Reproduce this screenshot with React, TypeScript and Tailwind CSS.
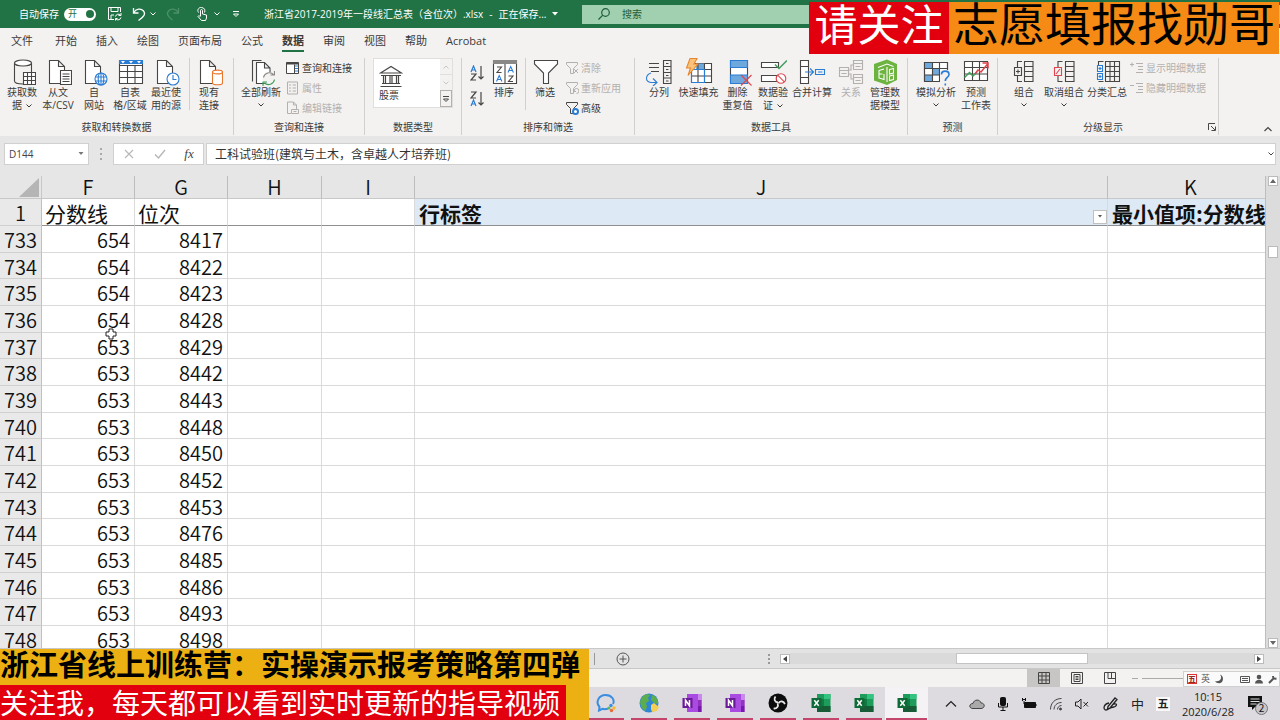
import React from "react";

const FONT = "font-['Open_Sans','Noto_Sans_CJK_SC',sans-serif]";
const CJK = "font-['Noto_Sans_CJK_SC',sans-serif]";

const INK = "#484644";
const BLUE = "#2b7cd3";
const GREEN = "#3f9c5a";
const RED = "#e0444f";
const PALE = "#6fa8dc";

type DrawProps = { children: React.ReactNode; color?: string };

function Draw({ children, color = INK }: DrawProps) {
  return (
    <svg
      aria-hidden="true"
      className="h-7 w-7 shrink-0"
      viewBox="0 0 28 28"
      fill="none"
      stroke={color}
      strokeWidth="1.1"
    >
      {children}
    </svg>
  );
}

function SmallDraw({ children, color = INK }: DrawProps) {
  return (
    <svg
      aria-hidden="true"
      className="h-3.5 w-3.5 shrink-0"
      viewBox="0 0 14 14"
      fill="none"
      stroke={color}
      strokeWidth="1"
    >
      {children}
    </svg>
  );
}

const page = <path d="M5.5 2.5h9l6 6v17h-15zM14.5 2.5v6h6" fill="#fff" />;

const icons = {
  getData: (
    <Draw>
      <path d="M6.500 5v18c0 2 4 3 8.500 3M23.500 5v10" />
      <ellipse cx="15" cy="5" rx="8.500" ry="3" fill="#fff" />
      <path d="M15.500 14.500h12v12h-12z" fill="#fff" />
      <path d="M15.500 18.500h12M15.500 22.500h12M19.500 14.500v12M23.500 14.500v12" />
    </Draw>
  ),
  text: (
    <Draw>
      {page}
      <path d="M16.500 12.500h11v14h-11z" fill="#fff" />
      <path d="M18.500 16h7M18.500 18.500h7M18.500 21h7M18.500 23.500h7" />
    </Draw>
  ),
  web: (
    <Draw>
      {page}
      <g stroke={BLUE}>
        <circle cx="21" cy="21" r="6" fill="#fff" />
        <ellipse cx="21" cy="21" rx="2.800" ry="6" />
        <path d="M15.500 19h11M15.500 23h11M21 15v12" />
      </g>
    </Draw>
  ),
  table: (
    <Draw>
      <path d="M3.500 2.500h23v23h-23z" fill="#fff" />
      <path d="M3 2h24v4H3z" fill={BLUE} stroke="none" />
      <path d="M5 3h4L7 5.500zM13 3h4l-2 2.500zM21 3h4l-2 2.500z" fill="#fff" stroke="none" />
      <path d="M3.500 7.500h23M3.500 13.500h23M3.500 19.500h23M11.500 7v18.500M19 7v18.500" />
    </Draw>
  ),
  recent: (
    <Draw>
      {page}
      <circle cx="21" cy="21" r="6" fill="#fff" stroke={BLUE} />
      <path d="M21 17v4.500h3.500" stroke={BLUE} />
    </Draw>
  ),
  existing: (
    <Draw>
      {page}
      <g stroke="#e8762d">
        <path d="M17.500 14v11c0 2.300 10 2.300 10 0V14" fill="#fff" />
        <ellipse cx="22.500" cy="14" rx="5" ry="1.900" fill="#fff" />
      </g>
    </Draw>
  ),
  refresh: (
    <Draw>
      <path d="M5.500 23.500v-21h9" />
      <path d="M9.500 4.500h8l5.500 5.500v15.500H9.500zM17.500 4.500V10H23" fill="#fff" />
      <circle cx="22" cy="20.500" r="6.500" fill="#f3f2f1" stroke="none" />
      <path d="M16.500 19.500a6 6 0 0 1 10-3M27.500 13v4h-4" stroke="#8a8886" />
      <path d="M27.500 21.500a6 6 0 0 1-10 3.500M16 28v-4h4" stroke={GREEN} />
    </Draw>
  ),
  sort: (
    <Draw>
      <path d="M3.500 2.500h23v23h-23z" fill="#fff" />
      <path d="M3 2h24v4H3z" fill="#8a8886" stroke="none" />
      <path d="M15 6v19.500" />
      <path d="M7 9h4.500L7 14.500h4.500M18.500 18h4.500l-4.500 5.500H23" />
      <path d="M6.500 23.500l2.700-6 2.700 6M7.500 21.500h3.500M18 14.500l2.700-6 2.700 6M19 12.500h3.500" stroke={BLUE} />
    </Draw>
  ),
  filter: (
    <Draw>
      <path d="M3.500 2.500h23v3.500l-9 9v10.500h-5V15l-9-9z" fill="#fff" />
    </Draw>
  ),
  columns: (
    <Draw>
      <path d="M4 5.500h10M4 9.500h10M6 13.500h8" />
      <path d="M6 15c-6 2-6 9 0 9.500h5M8 20.500l4 4-4 3.500" stroke={BLUE} />
      <path d="M18.500 2.500h7.500v23h-7.500zM18.500 8.500H26M18.500 14.500H26M18.500 20H26M21 5.500h2.500M21 11.500h2.500M21 17.500h2.500M21 23h2.500" />
    </Draw>
  ),
  flash: (
    <Draw>
      <path d="M6.500 5.500h20v19h-20z" fill="#fff" />
      <path d="M11 5.500h8.500v6H11z" fill={PALE} stroke="none" />
      <path d="M6.500 11.500h20M6.500 18h20M13 5.500v19M19.500 5.500v19" />
      <path d="M6.500 11.500h13v13h-13z" stroke={BLUE} />
      <path d="M5 0.500h7L9 6h4L3 17.500 5.500 10H1.500z" fill="#f8c27a" stroke="#e8862d" />
    </Draw>
  ),
  duplicates: (
    <Draw>
      <path d="M6.500 2.500h17v23h-17z" fill="#fff" />
      <path d="M6.500 2.500h17v7h-17zM6.500 17h17v8.500h-17z" fill={PALE} stroke={BLUE} />
      <path d="M17 17l10.500 10.500M27.500 17L17 27.500" stroke={RED} />
    </Draw>
  ),
  validation: (
    <Draw>
      <path d="M2.500 4.500h17v5h-17zM2.500 17.500h15v6h-15z" fill="#fff" />
      <path d="M16 6.500l4 4 8-8" stroke={GREEN} strokeWidth="1.500" />
      <circle cx="22" cy="20.500" r="4.800" fill="#fff" stroke={RED} />
      <path d="M18.700 17.200l6.600 6.600" stroke={RED} />
    </Draw>
  ),
  consolidate: (
    <Draw>
      <path d="M2.500 2.500h8v23h-8zM2.500 8.500h8M2.500 19.500h8" fill="#fff" />
      <path d="M7 14h8M12 10.500l3.500 3.500-3.500 3.500M17.500 11.500h9v5h-9zM20 14h4.500" stroke={BLUE} />
    </Draw>
  ),
  relations: (
    <Draw color="#b3b0ad">
      <path d="M2.500 9.500h9v9h-9zM2.500 12.500h9M16.500 2.500h9v9h-9zM16.500 5.500h9M16.500 16.500h9v9h-9zM16.500 19.500h9M11.500 12h2.500V7h2.500M11.500 16H14v5h2.500M4.500 15.500h5M18.500 8.500h5M18.500 22.500h5" />
    </Draw>
  ),
  model: (
    <Draw>
      <path d="M3 6l13-4.500L26 6v16l-10 5L3 22.500z" fill="#6cb33f" stroke="none" />
      <path d="M7 9.500l9-3.500 6.500 2.500M8 12v8.500M8 12.500l5-1.500M8 16h3.500M8 20l5 1.500V16M16 9v15M18.500 11.500l4-1v4.500l-4 1zM18.500 18l4-1v4.500l-4 1z" stroke="#fff" />
    </Draw>
  ),
  whatIf: (
    <Draw>
      <path d="M2.500 4.500h23v19h-23z" fill="#fff" />
      <path d="M2.500 4.500h8v6h-8zM10.500 10.500h7v6.500h-7zM2.500 17h8v6.500h-8z" fill={PALE} stroke="none" />
      <path d="M2.500 4.500h23v19h-23zM2.500 10.500h23M2.500 17h23M10.500 4.500v19M17.500 4.500v19" />
      <path d="M18 12h10v16H18z" fill="#f3f2f1" stroke="none" />
      <path d="M19.500 16.500c0-4.500 7.500-4.500 7.500 0 0 3-3.700 3-3.700 6.500M23.300 25.500v2" stroke={BLUE} strokeWidth="1.600" />
    </Draw>
  ),
  forecast: (
    <Draw>
      <path d="M2.500 3.500h23v19h-23zM2.500 9.500h23M2.500 16h23M10.500 3.500v19M17.500 3.500v19" fill="#fff" />
      <path d="M2.500 19.500l5-5 3.500 3.500 4-4" stroke={GREEN} strokeWidth="1.500" />
      <path d="M13 16l3-4 3 2 7-8.500M20.500 5H26v5.500" stroke={RED} strokeWidth="1.500" />
    </Draw>
  ),
  group: (
    <Draw>
      <path d="M14.500 3.500H23v20h-8.500zM14.500 8.500H23M14.500 13.500H23M14.500 18.500H23M12 3.500H7.500V9M12 23.500H7.500V18M4.500 9.500h7v8h-7zM6 13.500h4M8 11.500v4" />
    </Draw>
  ),
  ungroup: (
    <Draw>
      <path d="M15.500 3.500H24v20h-8.500zM15.500 8.500H24M15.500 13.500H24M15.500 18.500H24M12.500 3.500H8V9M12.500 23.500H8V18" />
      <path d="M4.500 9.500h7v8h-7zM6 16l4-5" stroke={RED} />
    </Draw>
  ),
  subtotal: (
    <Draw>
      <path d="M12.500 3.500h14v20h-14zM12.500 8.500h14M12.500 13.500h14M12.500 18.500h14M17 3.500v20M21.500 3.500v20M10.500 3.500h-5V7M10.500 23.500h-5" />
      <path d="M4.500 7.500h5v6h-5zM4.500 15.500h5v6h-5zM5.500 10.500h3M7 9v3M5.500 18.500h3M7 17v3" stroke={BLUE} />
    </Draw>
  ),
};

const smallFilter = <path d="M1.500 1.500h11v2l-4 4v5h-3v-5l-4-4z" />;

const smallIcons = {
  queries: (
    <SmallDraw>
      <path d="M0.500 1.500h12v11h-12z" fill="#fff" />
      <path d="M0.500 2.500h12" strokeWidth="2" />
      <path d="M8.500 3.500v9" />
      <path d="M9 5h3M9 7.500h3M9 10h3" stroke={BLUE} />
    </SmallDraw>
  ),
  properties: (
    <SmallDraw color="#b3b0ad">
      <path d="M1.500 1h10v12h-10zM3 4h2M6.500 4h3.500M3 7h2M6.500 7h3.500M3 10h2M6.500 10h3.500" />
    </SmallDraw>
  ),
  links: (
    <SmallDraw color="#b3b0ad">
      <path d="M1.500 1h6l3 3v4M1.500 1v11.500H5M7.500 1v3h3M5.500 8.500h7v4h-7zM7.500 10.500h3" />
    </SmallDraw>
  ),
  clear: (
    <SmallDraw color="#b3b0ad">
      {smallFilter}
      <path d="M9 8l4 4M13 8l-4 4" />
    </SmallDraw>
  ),
  reapply: (
    <SmallDraw color="#b3b0ad">
      {smallFilter}
      <path d="M9 10a2.500 2.500 0 1 1 2.500 2.500M9 8v2.500h2" />
    </SmallDraw>
  ),
  advanced: (
    <SmallDraw>
      {smallFilter}
      <circle cx="10.500" cy="10.500" r="2.500" fill="#fff" stroke={BLUE} strokeWidth="2" />
    </SmallDraw>
  ),
  showDetail: (
    <SmallDraw color="#b3b0ad">
      <path d="M0 3.500h4M2 1.500v4M6 2.500h7M8 5.500h5M8 8.500h5M6 11.500h7" />
    </SmallDraw>
  ),
  hideDetail: (
    <SmallDraw color="#b3b0ad">
      <path d="M0 4.500h4M6 2.500h7M8 5.500h5M8 8.500h5M6 11.500h7" />
    </SmallDraw>
  ),
};

function Caret({ className = "" }: { className?: string }) {
  return (
    <svg aria-hidden="true" className={`inline-block h-1 w-1.5 ${className}`} viewBox="0 0 6 4" fill="none" stroke="currentColor">
      <path d="M0.500 0.500L3 3l2.500-2.500" />
    </svg>
  );
}

type BigProps = {
  icon: React.ReactNode;
  lines: string[];
  width: string;
  caret?: boolean;
  disabled?: boolean;
};

function Big({ icon, lines, width, caret, disabled }: BigProps) {
  return (
    <button
      type="button"
      disabled={disabled}
      className={`flex shrink-0 flex-col items-center whitespace-nowrap leading-[13px] ${width} ${disabled ? "text-[#b3b0ad]" : ""}`}
    >
      {icon}
      {lines.map((line, i) => (
        <span key={line} className="flex items-center gap-1">
          {line}
          {caret && lines.length > 1 && i === lines.length - 1 && <Caret />}
        </span>
      ))}
      {caret && lines.length === 1 && (
        <span className="flex h-3 items-center">
          <Caret />
        </span>
      )}
    </button>
  );
}

function Small({ icon, label, disabled }: { icon: React.ReactNode; label: string; disabled?: boolean }) {
  return (
    <button
      type="button"
      disabled={disabled}
      className={`flex h-5 items-center gap-0.5 whitespace-nowrap ${disabled ? "text-[#b3b0ad]" : ""}`}
    >
      {icon}
      {label}
    </button>
  );
}

function Group({ label, width, children, launcher }: { label: string; width: string; children: React.ReactNode; launcher?: boolean }) {
  return (
    <section aria-label={label} className={`flex shrink-0 flex-col border-r border-[#d2d0ce] ${width}`}>
      <div className="flex flex-1 items-start pl-1">{children}</div>
      <div className="flex h-4 items-center">
        <span className="flex-1 text-center">{label}</span>
        {launcher && (
          <button type="button" aria-label="分级显示设置" className="mr-0.5">
            <svg className="h-2 w-2" viewBox="0 0 8 8" fill="none" stroke={INK}>
              <path d="M0.500 7V0.500H7M3 3l4 4M7.500 3.500v4h-4" />
            </svg>
          </button>
        )}
      </div>
    </section>
  );
}

const Rule = () => <div className="mx-px h-[52px] w-px shrink-0 bg-[#d2d0ce]" />;

function SortLetters({ top, bottom, label }: { top: "A" | "Z"; bottom: "A" | "Z"; label: string }) {
  const a = (y: number) => <path key="a" d={`M1 ${y + 6}l2.500-6 2.500 6M2 ${y + 4}h3`} stroke={BLUE} />;
  const z = (y: number) => <path key="z" d={`M1 ${y}h5l-5 6h5`} stroke={INK} />;
  return (
    <button type="button" aria-label={label} className="flex h-[26px] items-center">
      <svg className="h-4 w-3.5" viewBox="0 0 14 16" fill="none" strokeWidth="1.200">
        {top === "A" ? a(1) : z(1)}
        {bottom === "A" ? a(9) : z(9)}
        <path d="M11 1v13M8.500 11.500L11 14l2.500-2.500" stroke={INK} />
      </svg>
    </button>
  );
}

const tabs = ["文件", "开始", "插入", "绘图", "页面布局", "公式", "数据", "审阅", "视图", "帮助", "Acrobat"];

function TitleBar() {
  return (
    <header className="flex h-7 shrink-0 items-center bg-[#217346] text-[10px] text-white">
      <label className="ml-[19px] flex items-center gap-[5px]">
        自动保存
        <button type="button" role="switch" aria-checked="true" className="flex h-[13px] w-8 items-center justify-between rounded-full bg-white pr-0.5 pl-1 text-[9px] text-[#217346]">
          开
          <span className="h-2 w-2 rounded-full bg-[#217346]" />
        </button>
      </label>
      <div className="ml-3 flex w-[130px] items-center">
        <button type="button" aria-label="保存">
          <svg className="h-3.5 w-3.5" viewBox="0 0 14 14" fill="none" stroke="#fff">
            <path d="M6 12.500H0.500v-12h12V5M3 0.500v4h7v-4M3 12V8h3" />
            <path d="M7.500 9.500a3 3 0 0 1 5-1.500M13 6v2.500h-2.500M13 10.500a3 3 0 0 1-5 1.500M7.500 13.500v-2h2" />
          </svg>
        </button>
        <button type="button" aria-label="撤消" className="ml-2.5 flex items-center gap-1">
          <svg className="h-3.5 w-3.5" viewBox="0 0 14 14" fill="none" stroke="#fff" strokeWidth="1.300">
            <path d="M1.500 1v5h5M1.500 6C4 1.500 9 1 11.500 4s0 6-5 9.500" />
          </svg>
          <Caret />
        </button>
        <button type="button" aria-label="恢复" disabled className="ml-2.5">
          <svg className="h-3.5 w-3.5" viewBox="0 0 14 14" fill="none" stroke="#4b9069" strokeWidth="1.300">
            <path d="M12.500 1v5h-5M12.500 6C10 1.500 5 1 2.500 4s0 6 4 9" />
          </svg>
        </button>
        <button type="button" aria-label="触摸/鼠标模式" className="ml-4 flex items-center gap-1.5">
          <svg className="h-3.5 w-3" viewBox="0 0 12 14" fill="none" stroke="#fff">
            <path d="M4.500 9V3.500c0-1.300 2-1.300 2 0V7l4 1v3l-1 2.500H5.500L2 9.500l1-1 1.500 1.500M2.500 5.500c-2-3 1-5.500 3-5 3 0 4 3 3 5" />
          </svg>
          <Caret />
        </button>
        <button type="button" aria-label="自定义快速访问工具栏" className="ml-3">
          <svg className="h-2 w-2" viewBox="0 0 8 8" fill="none" stroke="#fff">
            <path d="M1 1.500h6M1.500 4L4 6.500 6.500 4z" />
          </svg>
        </button>
      </div>
      <h1 className="ml-[26px] flex items-center gap-1.5 whitespace-nowrap">
        <span>浙江省2017-2019年一段线汇总表（含位次）.xlsx</span>
        <span>-</span>
        <span>正在保存...</span>
        <svg aria-hidden="true" className="h-1 w-1.5" viewBox="0 0 6 4" fill="#fff">
          <path d="M0 0h6L3 3.500z" />
        </svg>
      </h1>
      <label className="ml-auto flex h-[19px] w-[698px] items-center gap-3 bg-[#a0d0b0] pl-4 text-[#1e5c3a]">
        <svg aria-hidden="true" className="h-3 w-3" viewBox="0 0 12 12" fill="none" stroke="currentColor" strokeWidth="1.200">
          <circle cx="7.500" cy="4.500" r="3.800" />
          <path d="M4.800 7.200L0.500 11.500" />
        </svg>
        <input aria-label="搜索" placeholder="搜索" className="flex-1 bg-transparent outline-none placeholder:text-[#1e5c3a]" />
      </label>
    </header>
  );
}

function Ribbon() {
  return (
    <div className="shrink-0 bg-[#f3f2f1] text-[10px] text-[#3b3a39]">
      <nav className="flex h-[26px] items-start gap-[19px] pt-1 pl-[11px] text-[11px]">
        {tabs.map((tab) => (
          <button
            key={tab}
            type="button"
            className={`h-5 border-b-2 leading-[18px] first:mr-[3px] ${tab === "数据" ? "border-[#217346] font-bold" : "border-transparent"}`}
          >
            {tab}
          </button>
        ))}
      </nav>
      <div className="relative flex h-[82px] pt-1 pb-px">
        <Group label="获取和转换数据" width="w-[234px]">
          <Big icon={icons.getData} lines={["获取数", "据"]} width="w-9" caret />
          <Big icon={icons.text} lines={["从文", "本/CSV"]} width="w-9" />
          <Big icon={icons.web} lines={["自", "网站"]} width="w-9" />
          <Big icon={icons.table} lines={["自表", "格/区域"]} width="w-9" />
          <Big icon={icons.recent} lines={["最近使", "用的源"]} width="w-9" />
          <div className="w-1" />
          <Rule />
          <Big icon={icons.existing} lines={["现有", "连接"]} width="w-9" />
        </Group>
        <Group label="查询和连接" width="w-[131px]">
          <Big icon={icons.refresh} lines={["全部刷新"]} width="w-[46px]" caret />
          <div className="pl-0.5">
            <Small icon={smallIcons.queries} label="查询和连接" />
            <Small icon={smallIcons.properties} label="属性" disabled />
            <Small icon={smallIcons.links} label="编辑链接" disabled />
          </div>
        </Group>
        <Group label="数据类型" width="w-[97px]">
          <div className="ml-1 flex h-[50px] w-20 border border-[#e1dfdd] bg-white">
            <button type="button" className="flex flex-1 flex-col items-start pt-1.5 pl-[5px]">
              <svg aria-hidden="true" className="h-6 w-6" viewBox="0 0 24 24" fill="none" stroke={INK} strokeWidth="1.200">
                <path d="M1.500 8L12 1.500 22.500 8zM2 10.500h20M4.500 10.500v8M6.500 10.500v8M11 10.500v8M13 10.500v8M17.500 10.500v8M19.500 10.500v8M3 18.500h18M1.500 21.500h21" />
              </svg>
              <span className="leading-[13px]">股票</span>
            </button>
            <div className="flex w-3 flex-col bg-[#f3f2f1] text-[#c8c6c4]">
              <button type="button" aria-label="上一行" className="flex flex-1 items-center justify-center border-b border-[#e1dfdd]">
                <Caret className="rotate-180" />
              </button>
              <button type="button" aria-label="下一行" className="flex flex-1 items-center justify-center">
                <Caret />
              </button>
              <button type="button" aria-label="其他" className="flex flex-1 items-center justify-center border border-[#b3b0ad]">
                <svg className="h-2 w-2" viewBox="0 0 8 8" fill="none" stroke={INK}>
                  <path d="M1 1.500h6M1.500 4L4 6.500 6.500 4z" />
                </svg>
              </button>
            </div>
          </div>
        </Group>
        <Group label="排序和筛选" width="w-[173px]">
          <div className="flex w-[22px] flex-col pt-0.5 pl-1">
            <SortLetters top="A" bottom="Z" label="升序" />
            <SortLetters top="Z" bottom="A" label="降序" />
          </div>
          <Big icon={icons.sort} lines={["排序"]} width="w-8" />
          <div className="w-1" />
          <Rule />
          <Big icon={icons.filter} lines={["筛选"]} width="w-9" />
          <div className="pl-0.5">
            <Small icon={smallIcons.clear} label="清除" disabled />
            <Small icon={smallIcons.reapply} label="重新应用" disabled />
            <Small icon={smallIcons.advanced} label="高级" />
          </div>
        </Group>
        <Group label="数据工具" width="w-[273px]">
          <Big icon={icons.columns} lines={["分列"]} width="w-10" />
          <Big icon={icons.flash} lines={["快速填充"]} width="w-[39px]" />
          <Big icon={icons.duplicates} lines={["删除", "重复值"]} width="w-[39px]" />
          <Big icon={icons.validation} lines={["数据验", "证"]} width="w-8" caret />
          <Big icon={icons.consolidate} lines={["合并计算"]} width="w-[46px]" />
          <Big icon={icons.relations} lines={["关系"]} width="w-8" disabled />
          <Big icon={icons.model} lines={["管理数", "据模型"]} width="w-9" />
        </Group>
        <Group label="预测" width="w-[90px]">
          <Big icon={icons.whatIf} lines={["模拟分析"]} width="w-12" caret />
          <Big icon={icons.forecast} lines={["预测", "工作表"]} width="w-8" />
        </Group>
        <Group label="分级显示" width="w-[221px]" launcher>
          <div className="w-0.5" />
          <Big icon={icons.group} lines={["组合"]} width="w-10" caret />
          <Big icon={icons.ungroup} lines={["取消组合"]} width="w-10" caret />
          <Big icon={icons.subtotal} lines={["分类汇总"]} width="w-[46px]" />
          <div>
            <Small icon={smallIcons.showDetail} label="显示明细数据" disabled />
            <Small icon={smallIcons.hideDetail} label="隐藏明细数据" disabled />
          </div>
        </Group>
        <button type="button" aria-label="折叠功能区" className="mr-2 mb-0.5 ml-auto self-end">
          <svg className="h-2 w-2" viewBox="0 0 8 8" fill="none" stroke={INK} strokeWidth="1.200">
            <path d="M0.500 6L4 2.500 7.500 6" />
          </svg>
        </button>
      </div>
    </div>
  );
}

function FormulaBar() {
  return (
    <div className="flex h-10 shrink-0 items-start gap-1 bg-[#e6e6e6] pt-[7px] pr-1 pl-1">
      <div className="flex h-[22px] w-[85px] items-center border border-[#d2d0ce] bg-white pr-1 pl-1 text-[#444]">
        <input aria-label="名称框" defaultValue="D144" className="w-full min-w-0 bg-transparent text-[10px] outline-none" />
        <svg aria-hidden="true" className="h-1 w-1.5 shrink-0" viewBox="0 0 6 4" fill="#777">
          <path d="M0.500 0h5L3 3z" />
        </svg>
      </div>
      <div className="flex h-[22px] w-4 flex-col items-center justify-center gap-[3px]">
        <i className="h-0.5 w-0.5 bg-[#aaa]" />
        <i className="h-0.5 w-0.5 bg-[#aaa]" />
        <i className="h-0.5 w-0.5 bg-[#aaa]" />
      </div>
      <div className="flex h-[22px] w-[91px] items-center justify-around border border-[#d2d0ce] bg-white">
        <button type="button" aria-label="取消">
          <svg className="h-3 w-3" viewBox="0 0 12 12" fill="none" stroke="#b8b8b8" strokeWidth="1.200">
            <path d="M2 2l8 8M10 2l-8 8" />
          </svg>
        </button>
        <button type="button" aria-label="输入">
          <svg className="h-3 w-3" viewBox="0 0 12 12" fill="none" stroke="#b8b8b8" strokeWidth="1.500">
            <path d="M1 6.500L4.500 10 11 2" />
          </svg>
        </button>
        <button type="button" className="font-['Liberation_Serif',serif] text-[13px] leading-4 text-[#444] italic">
          fx
        </button>
      </div>
      <div className="-ml-0.5 flex h-[22px] flex-1 items-center border border-[#d2d0ce] bg-white pl-2">
        <input
          aria-label="编辑栏"
          defaultValue="工科试验班(建筑与土木，含卓越人才培养班)"
          className={`${CJK} flex-1 bg-transparent text-[12px] text-[#333] outline-none`}
        />
        <Caret className="mr-px text-[#444]" />
      </div>
    </div>
  );
}

const ranks = [8417, 8422, 8423, 8428, 8429, 8442, 8443, 8448, 8450, 8452, 8453, 8476, 8485, 8486, 8493, 8498];
const rows = ranks.map((rank, i) => ({ line: 733 + i, score: i < 4 ? 654 : 653, rank }));

const headCell = "border-r border-b border-[#bdbdbd] border-b-[#c8c8c8] p-0 text-center font-[350]";
const sideCell = "border-r border-b border-[#c0c0c0] border-b-[#d0d0d0] bg-[#e9e9e9] p-0 pt-0.5 text-center font-[350]";
const cell = "border-r border-b border-[#dadada] p-0 pt-0.5";

function Sheet() {
  return (
    <main className="flex min-h-0 flex-1 bg-[#e6e6e6]">
      <div className="relative min-w-0 flex-1 overflow-hidden bg-white">
        <table className={`${CJK} w-full table-fixed border-separate border-spacing-0 text-[20px] leading-[22px] font-[350] text-[#111]`}>
          <colgroup>
            <col className="w-[42px]" />
            <col className="w-[93px]" />
            <col className="w-[93px]" />
            <col className="w-[94px]" />
            <col className="w-[93px]" />
            <col />
            <col className="w-[157px]" />
          </colgroup>
          <thead>
            <tr className="h-[23px] bg-[#e6e6e6]">
              <th className="border-r border-b border-[#c8c8c8] p-0">
                <svg aria-label="全选" className="ml-auto h-[19px] w-[22px]" viewBox="0 0 22 19" fill="#b5b5b5">
                  <path d="M20 0v19H0z" />
                </svg>
              </th>
              {["F", "G", "H", "I", "J"].map((name) => (
                <th key={name} scope="col" className={headCell}>{name}</th>
              ))}
              <th scope="col" className="border-b border-[#c8c8c8] p-0 pl-2 text-center font-[350]">K</th>
            </tr>
          </thead>
          <tbody>
            <tr className="h-[27px] text-[21px]">
              <th scope="row" className={`${sideCell} border-b-[#8f8f8f] text-[20px]`}>1</th>
              <td className={`${cell} border-b-[#8f8f8f] pl-[3px] font-normal`}>分数线</td>
              <td className={`${cell} border-b-[#8f8f8f] pl-[3px] font-normal`}>位次</td>
              <td className={`${cell} border-b-[#8f8f8f]`} />
              <td className={`${cell} border-b-[#8f8f8f]`} />
              <td className={`${cell} border-b-[#8f8f8f] bg-[#dde9f5] pl-1 font-bold`}>
                <div className="flex items-end justify-between">
                  行标签
                  <button type="button" aria-label="筛选行标签" className="flex h-3.5 w-3.5 items-center justify-center border border-[#c0c0c0] bg-white">
                    <svg className="h-1 w-1.5" viewBox="0 0 6 4" fill="#555">
                      <path d="M1 0h4L3 2.500z" />
                    </svg>
                  </button>
                </div>
              </td>
              <td className="overflow-hidden border-b border-[#8f8f8f] bg-[#dde9f5] p-0 pt-0.5 pl-1 font-bold whitespace-nowrap">最小值项:分数线</td>
            </tr>
            {rows.map((row, i) => (
              <tr key={row.line} className={i % 3 === 1 ? "h-[26px]" : "h-[27px]"}>
                <th scope="row" className={sideCell}>{row.line}</th>
                <td className={`${cell} pr-1 text-right`}>{row.score}</td>
                <td className={`${cell} pr-1 text-right`}>{row.rank}</td>
                <td className={cell} />
                <td className={cell} />
                <td className={cell} />
                <td className="border-b border-[#dadada] p-0" />
              </tr>
            ))}
          </tbody>
        </table>
        <svg aria-hidden="true" className="absolute top-[152px] left-[105px] h-3 w-3" viewBox="0 0 12 12" fill="#fff" stroke="#222">
          <path d="M4 1h4v3h3v4H8v3H4V8H1V4h3z" />
        </svg>
      </div>
      <div className="flex w-[15px] flex-col items-center border-l border-[#bdbdbd] bg-[#dcdcdc]">
        <button type="button" aria-label="向上滚动" className="flex h-2.5 w-2.5 items-center justify-center border border-[#bbb] bg-white">
          <svg className="h-1 w-1.5" viewBox="0 0 6 4" fill="#666">
            <path d="M0 4h6L3 0z" />
          </svg>
        </button>
        <div className="mt-[60px] h-3 w-2.5 border border-[#bbb] bg-white" />
        <button type="button" aria-label="向下滚动" className="mt-auto flex h-2.5 w-2.5 items-center justify-center border border-[#bbb] bg-white">
          <svg className="h-1 w-1.5" viewBox="0 0 6 4" fill="#666">
            <path d="M0 0h6L3 4z" />
          </svg>
        </button>
      </div>
    </main>
  );
}

function SheetTabs() {
  return (
    <div className="flex h-[21px] shrink-0 items-center border-y border-[#c8c8c8] bg-[#e3e3e3] pr-4 pl-[594px]">
      <div className="h-3 w-px bg-[#999]" />
      <button type="button" aria-label="新工作表" className="ml-[21px]">
        <svg className="h-3.5 w-3.5" viewBox="0 0 14 14" fill="none" stroke="#555">
          <circle cx="7" cy="7" r="6" />
          <path d="M7 3.500v7M3.500 7h7" />
        </svg>
      </button>
      <div className="ml-auto flex w-[496px] items-center">
        <div className="flex w-3 flex-col gap-0.5">
          <i className="h-0.5 w-0.5 bg-[#999]" />
          <i className="h-0.5 w-0.5 bg-[#999]" />
          <i className="h-0.5 w-0.5 bg-[#999]" />
        </div>
        <button type="button" aria-label="向左滚动" className="flex h-2.5 w-2.5 items-center justify-center border border-[#bbb] bg-white">
          <svg className="h-1.5 w-1" viewBox="0 0 4 6" fill="#444">
            <path d="M4 0v6L0 3z" />
          </svg>
        </button>
        <div className="flex h-[11px] flex-1 justify-end bg-[#dadada] pr-[166px]">
          <div className="w-[132px] border border-[#c4c4c4] bg-white" />
        </div>
        <button type="button" aria-label="向右滚动" className="flex h-2.5 w-2.5 items-center justify-center border border-[#bbb] bg-white">
          <svg className="h-1.5 w-1" viewBox="0 0 4 6" fill="#444">
            <path d="M0 0v6l4-3z" />
          </svg>
        </button>
      </div>
    </div>
  );
}

function StatusBar() {
  return (
    <div className="relative flex h-[18px] shrink-0 items-stretch justify-end bg-[#f3f2f1]">
      <button type="button" aria-label="普通视图" className="flex w-[33px] items-center justify-center bg-[#c8c6c4]">
        <svg className="h-3 w-3" viewBox="0 0 12 12" fill="none" stroke="#444">
          <path d="M0.500 0.500h11v11H0.500zM0.500 4h11M0.500 8h11M4 0.500v11M8 0.500v11" />
        </svg>
      </button>
      <button type="button" aria-label="页面布局视图" className="flex w-[33px] items-center justify-center">
        <svg className="h-3 w-3" viewBox="0 0 12 12" fill="none" stroke="#444">
          <path d="M0.500 0.500h11v11H0.500zM3 2.500h6v7H3zM4.500 4.500h3M4.500 6h3M4.500 7.500h3" />
        </svg>
      </button>
      <button type="button" aria-label="分页预览" className="flex w-[33px] items-center justify-center">
        <svg className="h-3 w-3" viewBox="0 0 12 12" fill="none" stroke="#444">
          <path d="M0.500 0.500h11v11H0.500zM4 0.500v6h7.500M7.500 0.500v6" />
        </svg>
      </button>
      <div className="flex w-[154px] items-center gap-1 pl-1.5">
        <div className="h-px w-1.5 bg-[#aaa]" />
        <div className="h-px flex-1 bg-[#aaa]" />
      </div>
      <div className="absolute top-0.5 right-0 z-10 flex h-4 w-[97px] items-center gap-1 border border-[#d0d0d0] bg-[#fafafa] pl-[3px] text-[9px] text-[#555]">
        <span className="flex h-2.5 w-2.5 items-center justify-center border border-[#d33] text-[8px] leading-[8px] font-bold text-[#922]">五</span>
        英
        <svg aria-label="半角" className="h-2.5 w-2.5" viewBox="0 0 10 10" fill="#555">
          <path d="M6 0.500c3 4-0.500 7.500-5 6.500 2 3.500 8 3 8-2 0-2-1-4-3-4.500z" />
        </svg>
        <svg aria-label="软键盘" className="ml-3 h-2.5 w-2.5" viewBox="0 0 10 10" fill="none" stroke="#555">
          <path d="M0.500 2.500h9v6h-9zM2 4.500h6M2 6.500h6" />
        </svg>
        <svg aria-label="用户" className="h-2.5 w-2.5" viewBox="0 0 10 10" fill="#555">
          <circle cx="5" cy="3" r="2.300" />
          <path d="M1 9.500c0-5 8-5 8 0z" />
        </svg>
        <svg aria-label="设置" className="h-2.5 w-2.5" viewBox="0 0 10 10" fill="none" stroke="#555" strokeWidth="2">
          <path d="M1 9l5-5M5 2c0 2 1 3 3.500 2.500" />
        </svg>
      </div>
    </div>
  );
}

function ExcelLogo() {
  return (
    <svg className="h-5 w-5" viewBox="0 0 20 20">
      <path d="M6 1h13.500v18H6z" fill="#1e9c5c" />
      <path d="M13 1h6.500v5H13z" fill="#33c481" />
      <path d="M6 6h7v7H6z" fill="#107c41" />
      <path d="M6 13h13.500v6H6z" fill="#185c37" />
      <path d="M0.500 5h10v10h-10z" fill="#0e6a37" />
      <path d="M3.300 7.200l4.400 5.600M7.700 7.200l-4.400 5.600" stroke="#fff" strokeWidth="1.500" />
    </svg>
  );
}

function NoteLogo() {
  return (
    <svg className="h-5 w-5" viewBox="0 0 20 20">
      <path d="M5 1h14.500v18H5z" fill="#a94be0" />
      <path d="M16 1h3.500v6H16z" fill="#c987ef" />
      <path d="M16 7h3.500v6H16z" fill="#9332bf" />
      <path d="M16 13h3.500v6H16z" fill="#7719aa" />
      <path d="M0.500 5h10v10h-10z" fill="#6b1a99" />
      <path d="M3.500 13V7.200l4 5.600V7" stroke="#fff" strokeWidth="1.500" fill="none" />
    </svg>
  );
}

const apps = [
  {
    name: "企业微信",
    logo: (
      <svg className="h-5 w-5" viewBox="0 0 20 20" fill="none">
        <path d="M12 15.500c-2 .8-4 .8-5.500.3L3 17.500l.5-3.500C-1 9 3 2 9.500 2S19 7 17 11" stroke="#3b8de0" strokeWidth="2" />
        <circle cx="15" cy="12.500" r="1.700" fill="#3b8de0" />
        <circle cx="18" cy="15" r="1.700" fill="#f6b92c" />
        <circle cx="15.500" cy="17.500" r="1.700" fill="#e8663c" />
        <circle cx="13" cy="15" r="1.500" fill="#5cb85c" />
      </svg>
    ),
  },
  {
    name: "浏览器",
    logo: (
      <svg className="h-5 w-5" viewBox="0 0 20 20">
        <circle cx="10" cy="10" r="9.500" fill="#2f86d6" />
        <path d="M4 3c3-2.500 6-2 7-1L9 5l1 3-3 2 1 4-2 4C2 15 .5 10 1.500 7z" fill="#5cae4c" />
        <path d="M13 2c4 1 6.500 5 6 9l-4-1-3-3z" fill="#5cae4c" />
        <path d="M12 12l3-2 5 4-2 4-5 1-1-3z" fill="#f3cf57" />
      </svg>
    ),
  },
  { name: "OneNote", logo: <NoteLogo /> },
  { name: "OneNote 2016", logo: <NoteLogo /> },
  {
    name: "OBS",
    logo: (
      <svg className="h-5 w-5" viewBox="0 0 20 20" fill="none">
        <circle cx="10" cy="10" r="9.500" fill="#0c0c0c" />
        <g stroke="#e8e8e8" strokeWidth="1.800">
          <path d="M10 9.500C6.500 9 5.500 6 7.500 3.500" />
          <path d="M10 9.500C6.500 9 5.500 6 7.500 3.500" transform="rotate(120 10 10)" />
          <path d="M10 9.500C6.500 9 5.500 6 7.500 3.500" transform="rotate(240 10 10)" />
        </g>
      </svg>
    ),
  },
  { name: "Excel 1", logo: <ExcelLogo /> },
  { name: "Excel 2", logo: <ExcelLogo /> },
  { name: "Excel 3", logo: <ExcelLogo />, active: true },
];

function Taskbar() {
  return (
    <footer className="flex h-[33px] shrink-0 items-stretch bg-[#dddbe0] pl-[584px] text-[#222]">
      {apps.map((app) => (
        <button key={app.name} type="button" aria-label={app.name} className={`flex w-[43px] flex-col items-center px-px ${app.active ? "bg-[#f4f2f5]" : ""}`}>
          <span className="flex flex-1 items-center">{app.logo}</span>
          <span className={`h-0.5 bg-[#c4456b] ${app.active ? "w-full" : "w-9"}`} />
        </button>
      ))}
      <div className="ml-auto flex items-center gap-3 whitespace-nowrap">
        <svg aria-label="显示隐藏的图标" className="h-3 w-3" viewBox="0 0 12 12" fill="none" stroke="#222" strokeWidth="1.200">
          <path d="M1 8.500L6 3.500l5 5" />
        </svg>
        <svg aria-label="OneDrive" className="h-4 w-4" viewBox="0 0 16 16" fill="#aaa" stroke="#444">
          <path d="M4 12.500c-4.500 0-4-5 0-5C5 3 11 3 12 7c4.500 0 4 5.500 0 5.500z" />
        </svg>
        <svg aria-label="麦克风" className="h-4 w-3" viewBox="0 0 12 16" fill="#111" stroke="#111">
          <rect x="3.500" y="1.500" width="5" height="8" rx="1" />
          <path d="M1.500 7v4h9V7M6 11v3.500M3.500 14.500h5" fill="none" />
        </svg>
        <svg aria-label="电池" className="h-4 w-4" viewBox="0 0 16 16" fill="#111" stroke="#111">
          <path d="M3.500 6.500h11v5h-11zM15 8v2M1 3.500h4M1.500 2v3M4.500 2v3M3 5v3" />
        </svg>
        <svg aria-label="无线网络" className="h-3.5 w-3.5" viewBox="0 0 14 14" fill="none" stroke="#444">
          <path d="M1.500 12.500C1.500 6 6 1.500 12.500 1.500M5 12.500c0-4 3-7 7.500-7M8.500 12.500c0-2 1.500-4 4-4" />
          <circle cx="11.500" cy="12" r="1" fill="#444" />
        </svg>
        <svg aria-label="静音" className="h-3.5 w-3.5" viewBox="0 0 14 14" fill="none" stroke="#222">
          <path d="M0.500 5h2.500l3-3v10l-3-3H0.500zM8.500 5l4.500 4.500M13 5L8.500 9.500" />
        </svg>
        <svg aria-label="Windows Ink" className="ml-0.5 h-4 w-4" viewBox="0 0 16 16" fill="none" stroke="#222" strokeWidth="1.300">
          <path d="M5 10.500L12 2l2 1.500-7 8.500-2.500 1zM9 9c5-3 6 .5 2 2M6 7c-6 1-6 7-3 7s3-3 8-3" />
        </svg>
        <span className={`${CJK} text-[13px]`}>中</span>
        <span className={`${CJK} flex h-3.5 w-3.5 items-center justify-center bg-[#f8f8f8] text-[11px] font-bold`}>五</span>
        <time className="text-center text-[11px] leading-[15px]">
          10:15
          <br />
          2020/6/28
        </time>
        <button type="button" aria-label="通知" className="mr-2.5">
          <svg className="h-6 w-6" viewBox="0 0 24 24" fill="none">
            <path d="M2 4h14v11H9l-3 3v-3H2z" fill="#111" />
            <path d="M4.500 7h9M4.500 9.500h9M4.500 12h6" stroke="#ddd" />
            <circle cx="15.500" cy="16.500" r="6" fill="#c8c6ca" stroke="#777" />
            <text x="15.500" y="20" textAnchor="middle" fontSize="10" fill="#111" className={CJK}>2</text>
          </svg>
        </button>
      </div>
    </footer>
  );
}

export default function App() {
  return (
    <div className={`${FONT} relative flex h-screen flex-col overflow-hidden bg-[#e6e6e6]`}>
      <TitleBar />
      <Ribbon />
      <FormulaBar />
      <Sheet />
      <SheetTabs />
      <StatusBar />
      <Taskbar />
      <aside className={`${CJK} absolute top-0.5 right-px z-20 flex h-[52px] whitespace-nowrap`}>
        <p className="h-full w-[140px] bg-[#e2000f] text-center text-[43px] leading-[40px] text-white">请关注</p>
        <p className="h-full w-[330px] bg-[#f58a14] text-center text-[46px] leading-[38px] text-black">志愿填报找勋哥</p>
      </aside>
      <aside className={`${CJK} absolute bottom-0 left-0 z-20 w-[589px] bg-[#ecb012] whitespace-nowrap`}>
        <p className="h-9 text-[29px] leading-[28px] font-bold text-black">浙江省线上训练营：实操演示报考策略第四弹</p>
        <p className="h-[35px] w-[566px] bg-[#e2000f] text-[28px] leading-[34px] text-white">关注我，每天都可以看到实时更新的指导视频</p>
      </aside>
    </div>
  );
}
